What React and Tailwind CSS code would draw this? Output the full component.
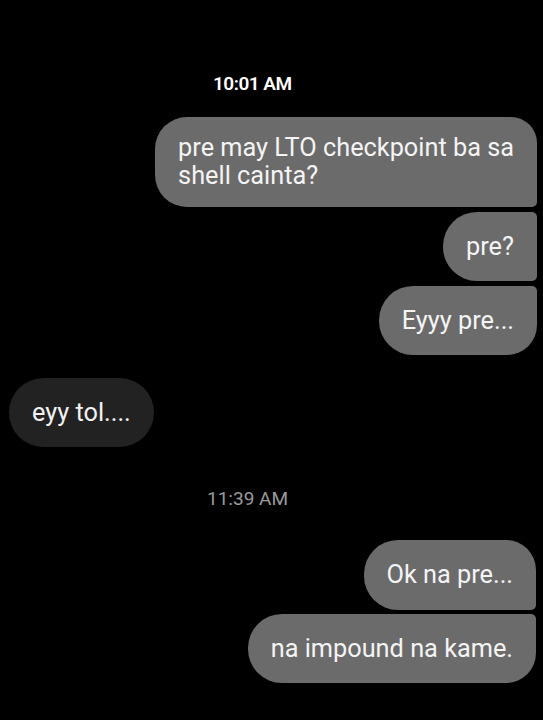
export default function App() {
  const bubble =
    "bg-[#6b6b6b] text-[#f4f4f4] text-[25.3px] leading-[28px] px-[23px] flex items-center whitespace-nowrap";
  return (
    <div
      className="w-[543px] h-[720px] bg-black overflow-hidden flex flex-col"
      style={{ fontFamily: "Roboto, 'Noto Sans', sans-serif" }}
    >
      <div className="h-[117px] flex flex-col">
        <div className="mt-[72px] pl-[213px] text-white text-[19px] leading-[24px] font-semibold tracking-[-0.5px]">
          10:01 AM
        </div>
      </div>
      <div className="flex flex-col items-end pr-[6px] gap-[5px]">
        <div className={`${bubble} h-[90px] rounded-l-[32px] rounded-tr-[26px] rounded-br-[5px]`}>
          <span>
            pre may LTO checkpoint ba sa
            <br />
            shell cainta?
          </span>
        </div>
        <div className={`${bubble} h-[69px] rounded-l-[34px] rounded-r-[5px]`}>pre?</div>
        <div className={`${bubble} h-[69px] rounded-l-[34px] rounded-tr-[5px] rounded-br-[30px]`}>
          Eyyy pre...
        </div>
      </div>
      <div className="mt-[23px] pl-[9px] flex">
        <div className="bg-[#222222] text-[#f2f2f2] text-[25.3px] leading-[28px] h-[69px] px-[23px] rounded-full flex items-center whitespace-nowrap">
          eyy tol....
        </div>
      </div>
      <div className="mt-[40px] pl-[207px] text-[#9a9a9a] text-[19px] leading-[24px]">
        11:39 AM
      </div>
      <div className="mt-[29px] flex flex-col items-end pr-[7px] gap-[4px]">
        <div className={`${bubble} h-[70px] rounded-l-[34px] rounded-tr-[30px] rounded-br-[5px]`}>
          Ok na pre...
        </div>
        <div className={`${bubble} h-[69px] rounded-l-[34px] rounded-tr-[5px] rounded-br-[30px]`}>
          na impound na kame.
        </div>
      </div>
    </div>
  );
}
